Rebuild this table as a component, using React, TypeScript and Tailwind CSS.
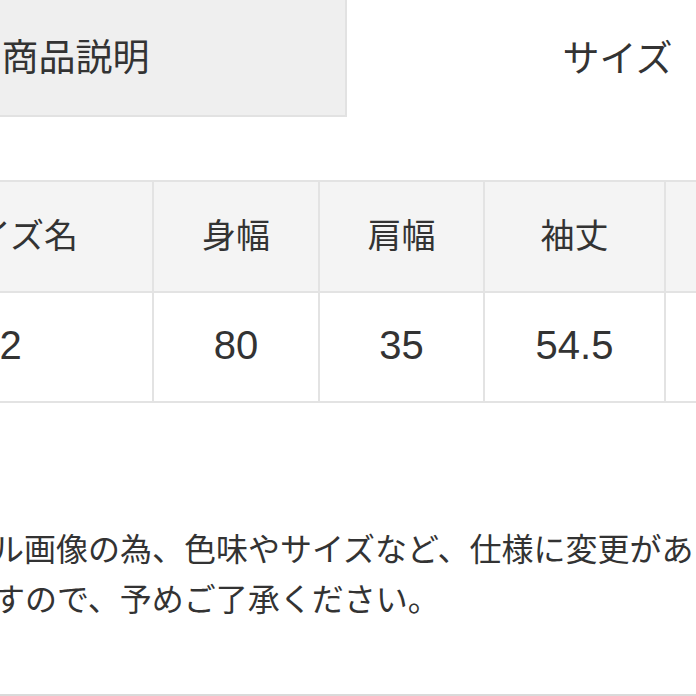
import React from "react";

const font = { fontFamily: '"Noto Sans CJK JP", "Noto Sans", sans-serif' };

export default function App() {
  const headers = ["サイズ名", "身幅", "肩幅", "袖丈", "着丈"];
  const values = ["2", "80", "35", "54.5", "60"];
  const widths = ["w-[285px]", "w-[166px]", "w-[165px]", "w-[181px]", "w-[200px]"];
  return (
    <div
      className="w-[696px] h-[696px] overflow-hidden bg-white text-[#333] flex flex-col"
      style={font}
    >
      {/* Tabs */}
      <div className="flex -ml-[194px] w-[1082px] h-[117px] shrink-0">
        <div className="w-[541px] h-full bg-[#efefef] border-r-2 border-b-2 border-[#e2e2e2] flex items-center justify-center text-[37px] pb-[4px]">
          商品説明
        </div>
        <div className="w-[541px] h-full bg-white flex items-center justify-center text-[37px] pb-[4px]">
          サイズ
        </div>
      </div>

      {/* Size table */}
      <div className="mt-[63px] -ml-[131px] w-[1000px] border-t-2 border-[#e3e3e3] shrink-0">
        <div className="flex h-[111px] bg-[#f4f4f4] border-b-2 border-[#e3e3e3]">
          {headers.map((h, i) => (
            <div
              key={h}
              className={`${widths[i]} shrink-0 border-r-2 border-[#e3e3e3] flex items-center justify-center text-[34px] pb-[6px]`}
            >
              {h}
            </div>
          ))}
        </div>
        <div className="flex h-[110px] bg-white border-b-2 border-[#e3e3e3]">
          {values.map((v, i) => (
            <div
              key={i}
              className={`${widths[i]} shrink-0 border-r-2 border-[#e3e3e3] flex items-center justify-center text-[40px] pb-[4px]`}
              style={{ fontFamily: '"Liberation Sans", Arial, sans-serif' }}
            >
              {v}
            </div>
          ))}
        </div>
      </div>

      {/* Note */}
      <div className="mt-[119px] -ml-[135px] text-[32px] leading-[50px] whitespace-nowrap shrink-0">
        <div>※サンプル画像の為、色味やサイズなど、仕様に変更がある場合が</div>
        <div>ございますので、予めご了承ください。</div>
      </div>

      <div className="flex-1" />
      <div className="h-[2px] bg-[#dadada] w-full shrink-0" />
    </div>
  );
}
